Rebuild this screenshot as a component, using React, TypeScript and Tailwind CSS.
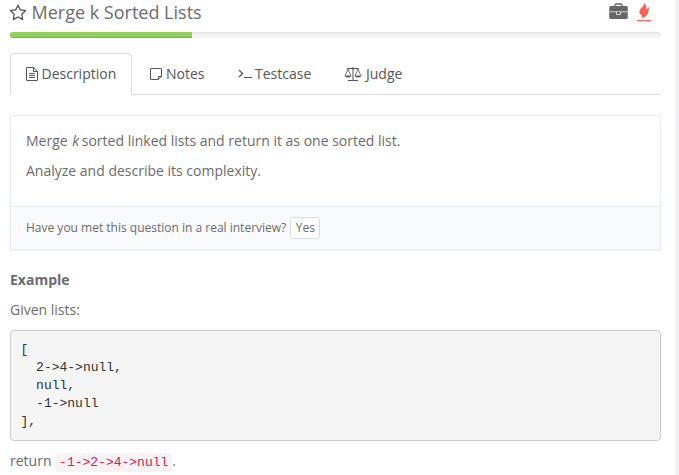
import React from "react";

function StarIcon() {
  return (
    <svg className="-ml-px h-[18px] w-[18px] shrink-0" viewBox="0 0 1792 1792" fill="#555">
      <path d="M1201 1004l306-297-422-62-189-382-189 382-422 62 306 297-73 421 378-199 377 199zM1728 647q0 22-26 48l-363 354 86 500q1 7 1 20 0 50-41 50-19 0-40-12l-449-236-449 236q-22 12-40 12-21 0-31.5-14.5t-10.5-35.5q0-6 2-20l86-500-364-354q-25-27-25-48 0-37 56-46l502-73 225-455q19-41 49-41t49 41l225 455 502 73q56 9 56 46z" />
    </svg>
  );
}

function BriefcaseIcon() {
  return (
    <svg className="h-[17px] w-[19px]" viewBox="0 0 19 17">
      <path d="M6 4V2.2Q6 1 7.2 1H11.8Q13 1 13 2.2V4" fill="none" stroke="#666" strokeWidth="1.3" />
      <path d="M1.7 3H17.3Q18.8 3 18.8 4.5V8H.2V4.5Q.2 3 1.7 3Z" fill="#666" />
      <path d="M.2 9H18.8V14.6Q18.8 16 17.3 16H1.7Q.2 16 .2 14.6Z" fill="#666" />
      <path d="M.2 8H18.8V9.4H.2Z" fill="#b5b5b5" />
      <path d="M7.5 9V11.5H11.5V9" fill="#666" stroke="#ddd" strokeWidth="1" />
    </svg>
  );
}

function FlameIcon() {
  return (
    <svg className="h-[19px] w-[14px]" viewBox="0 0 14 19" fill="#ff6254">
      <path d="M7 0C7.2 2.6 4.4 4.4 3 6.4C1.7 8.6 2.4 10.6 4.3 12C5.3 12.8 5.3 14 4.8 15.2C8.6 13.8 11.3 11.2 11.6 8C11.8 6.2 12 4.9 12.2 3.6C11.3 4.8 10.4 5.8 9.4 6.8C9.9 4 9.2 1.5 7 0Z" />
      <path d="M0 17H14V18.2H0Z" />
    </svg>
  );
}

function FileIcon() {
  return (
    <svg className="h-[14px] w-[12px]" viewBox="0 0 12 14" fill="none" stroke="#555">
      <path d="M.5 1Q.5.5 1 .5H7.8L11.5 4.2V13Q11.5 13.5 11 13.5H1Q.5 13.5.5 13ZM7.5.5V4.5H11.5M3 6.5H9M3 8.5H9M3 10.5H9" />
    </svg>
  );
}

function NoteIcon() {
  return (
    <svg className="h-[12px] w-[12px]" viewBox="0 0 12 12" fill="none" stroke="#555">
      <path d="M1 .5H11Q11.5.5 11.5 1V8.3L8.3 11.5H1Q.5 11.5.5 11V1Q.5.5 1 .5ZM8.5 11.5V8.5H11.5" />
    </svg>
  );
}

function TerminalIcon() {
  return (
    <svg className="h-[12px] w-[14px]" viewBox="0 0 14 12" fill="none" stroke="#555">
      <path d="M1 2L4.5 5.5L1 9" strokeWidth="1.3" />
      <path d="M6 9.5H14" />
    </svg>
  );
}

function ScaleIcon() {
  return (
    <svg className="h-[14px] w-[18px]" viewBox="0 0 18 14" fill="none" stroke="#555">
      <path d="M3 1.5H15M9 .5V13M4 13.5H14" />
      <path d="M4 2L1.2 8.5M4 2L6.8 8.5M14 2L11.2 8.5M14 2L16.8 8.5" strokeWidth=".8" />
      <path d="M.5 8.5H7.5Q7.1 10.5 4 10.5T.5 8.5ZM10.5 8.5H17.5Q17.1 10.5 14 10.5T10.5 8.5Z" fill="#555" stroke="none" />
      <circle cx="9" cy="1.5" r="1" fill="#555" stroke="none" />
    </svg>
  );
}

function Tab({ icon, label, className }: { icon: React.ReactNode; label: string; className: string }) {
  return (
    <div className={`flex items-center text-[#555] ${className}`}>
      {icon}
      <span>{label}</span>
    </div>
  );
}

export default function App() {
  return (
    <div className="flex h-[475px] w-[679px] overflow-hidden bg-[#f1f3fa] font-['Open_Sans','Noto_Sans',sans-serif] text-[14px] leading-5 text-[#6b6b6b]">
      <main className="h-full w-[677px] shrink-0 border-r border-[#e7ecf1] bg-white pl-[10px]">
        <div className="w-[651px]">
          <header className="flex h-[32px] justify-between">
            <div className="flex h-[25px] items-center">
              <StarIcon />
              <h1 className="ml-[4.5px] text-[18px] leading-[25px]">Merge k Sorted Lists</h1>
            </div>
            <div className="flex items-start gap-[9px] pr-[10px] pt-[3px]">
              <BriefcaseIcon />
              <FlameIcon />
            </div>
          </header>
          <div className="h-[6px] overflow-hidden rounded-[4px] bg-[#f5f5f5] shadow-[inset_0_1px_2px_rgba(0,0,0,0.1)]">
            <div className="h-full w-[182px] bg-[#92cf5c] shadow-[inset_0_-1px_0_rgba(0,0,0,0.15)]" />
          </div>

          <nav className="mt-[15px] flex h-[42px] border-b border-[#ddd]">
            <Tab icon={<FileIcon />} label="Description" className="h-[42px] w-[122px] gap-[3.5px] rounded-t-[4px] border border-b-0 border-[#ddd] bg-white pb-[2px] pl-[15px]" />
            <Tab icon={<NoteIcon />} label="Notes" className="h-[41px] w-[88px] gap-[4px] pl-[18px]" />
            <Tab icon={<TerminalIcon />} label="Testcase" className="h-[41px] w-[107px] gap-[3px] pl-[18px]" />
            <Tab icon={<ScaleIcon />} label="Judge" className="h-[41px] gap-[4px] pl-[17px]" />
          </nav>

          <section className="mt-[20px] h-[135px] border border-[#e7ecf5] shadow-[0_1px_2px_rgba(0,0,0,0.06)]">
            <div className="h-[90px] px-[15px] pt-[15px]">
              <p>Merge <em className="ml-px">k</em><span className="-ml-px"> sorted linked lists and return it as one sorted list.</span></p>
              <p className="mt-[10px]">Analyze and describe its complexity.</p>
            </div>
            <div className="flex h-[43px] items-center border-t border-[#e7ecf1] bg-[#f9fafc] px-[15px] text-[12px]">
              <span>Have you met this question in a real interview?</span>
              <button className="ml-[4px] h-[22px] w-[30px] rounded-[3px] border border-[#d9dde8] bg-white text-[12px] leading-5">Yes</button>
            </div>
          </section>

          <h2 className="mt-[20px] font-bold">Example</h2>
          <p className="mt-[10px]">Given lists:</p>
          <pre className="mt-[10px] h-[111px] rounded-[4px] border border-[#ccc] bg-[#f5f5f5] px-[9.5px] py-[10px] font-['Liberation_Mono',monospace] text-[13px] leading-[18px] text-[#333]">{`[
  2->4->null,
  null,
  -1->null
],`}</pre>
          <p className="mt-[10px] whitespace-nowrap">return <code className="rounded-[4px] bg-[#f9f2f4] px-[4px] py-[2px] font-['Liberation_Mono',monospace] text-[13px] text-[#c7254e]">-1-&gt;2-&gt;4-&gt;null</code>.</p>
        </div>
      </main>
    </div>
  );
}
